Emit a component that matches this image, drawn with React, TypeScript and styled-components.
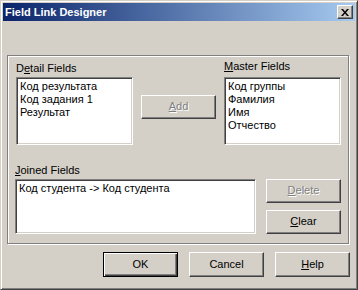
import React from "react";
import styled, { createGlobalStyle } from "styled-components";

const Global = createGlobalStyle`
  html, body { margin: 0; padding: 0; background: #d4d0c8; }
  body { font-family: "Liberation Sans", Arial, sans-serif; font-size: 11px; color: #000; }
  * { box-sizing: border-box; }
`;

const Window = styled.div`
  width: 358px;
  height: 290px;
  background: #d4d0c8;
  border: 1px solid;
  border-color: #d4d0c8 #404040 #404040 #d4d0c8;
  box-shadow: inset 1px 1px #fff, inset -1px -1px #808080;
  padding: 2px;
  display: flex;
  flex-direction: column;
`;

const TitleBar = styled.div`
  height: 18px;
  display: flex;
  align-items: center;
  padding: 0 2px 0 2px;
  background: linear-gradient(to right, #0a246a, #a6caf0);
`;

const Title = styled.div`
  flex: 1;
  color: #fff;
  font-weight: bold;
  font-size: 11px;
  line-height: 13px;
  white-space: nowrap;
`;

const CloseBtn = styled.div`
  width: 16px;
  height: 14px;
  background: #d4d0c8;
  border: 1px solid;
  border-color: #fff #404040 #404040 #fff;
  box-shadow: inset -1px -1px #808080;
  display: flex;
  align-items: center;
  justify-content: center;
`;

const Body = styled.div`
  flex: 1;
  display: flex;
  flex-direction: column;
  padding: 34px 5px 0 4px;
`;

const GroupBox = styled.div`
  width: 342px;
  height: 189px;
  border: 1px solid #808080;
  box-shadow: inset 1px 1px #fff, 1px 1px #fff;
  padding: 4px 0 0 7px;
  display: flex;
  flex-direction: column;
`;

const TopRow = styled.div`
  display: flex;
  align-items: flex-start;
`;

const Column = styled.div<{ $mt?: number; $ml?: number }>`
  display: flex;
  flex-direction: column;
  margin-top: ${(p) => p.$mt ?? 0}px;
  margin-left: ${(p) => p.$ml ?? 0}px;
`;

const Label = styled.div<{ $gap: number }>`
  line-height: 13px;
  height: 13px;
  margin-bottom: ${(p) => p.$gap}px;
  white-space: nowrap;
`;

const ListBox = styled.div<{ $w: number; $h: number }>`
  width: ${(p) => p.$w}px;
  height: ${(p) => p.$h}px;
  background: #fff;
  border: 1px solid;
  border-color: #808080 #fff #fff #808080;
  box-shadow: inset 1px 1px #404040, inset -1px -1px #d4d0c8;
  padding: 2px 2px 0 3px;
  overflow: hidden;
`;

const Item = styled.div`
  line-height: 13px;
  height: 13px;
  white-space: nowrap;
`;

const Button = styled.div<{ $disabled?: boolean; $default?: boolean; $h?: number }>`
  width: 75px;
  height: ${(p) => p.$h ?? 24}px;
  background: #d4d0c8;
  display: flex;
  align-items: center;
  justify-content: center;
  border: 1px solid;
  border-color: ${(p) => (p.$default ? "#000" : "#fff #404040 #404040 #fff")};
  box-shadow: ${(p) =>
    p.$default
      ? "inset 1px 1px #fff, inset -1px -1px #404040, inset -2px -2px #808080"
      : "inset -1px -1px #808080"};
  color: ${(p) => (p.$disabled ? "#808080" : "#000")};
  text-shadow: ${(p) => (p.$disabled ? "1px 1px #fff" : "none")};
  line-height: 13px;
  padding-bottom: 1px;
`;

const AddSlot = styled.div`
  margin: 35px 8px 0 8px;
`;

const JoinedRow = styled.div`
  display: flex;
  align-items: flex-start;
  margin-top: 19px;
`;

const SideButtons = styled.div`
  display: flex;
  flex-direction: column;
  gap: 7px;
  margin-left: 10px;
  margin-top: 15px;
`;

const Footer = styled.div`
  display: flex;
  justify-content: flex-end;
  gap: 11px;
  margin-top: 8px;
`;

const U = styled.span`
  text-decoration: underline;
  text-underline-offset: 1px;
`;

export default function App() {
  return (
    <>
      <Global />
      <Window>
        <TitleBar>
          <Title>Field Link Designer</Title>
          <CloseBtn>
            <svg width="8" height="7" viewBox="0 0 8 7">
              <path d="M0 0h2l2 2.5L6 0h2L5 3.5 8 7H6L4 4.5 2 7H0l3-3.5z" fill="#000" />
            </svg>
          </CloseBtn>
        </TitleBar>
        <Body>
          <GroupBox>
            <TopRow>
              <Column $mt={2} $ml={1}>
                <Label $gap={2}>
                  D<U>e</U>tail Fields
                </Label>
                <ListBox $w={117} $h={68}>
                  <Item>Код результата</Item>
                  <Item>Код задания 1</Item>
                  <Item>Результат</Item>
                </ListBox>
              </Column>
              <AddSlot>
                <Button $disabled>
                  <span>
                    <U>A</U>dd
                  </span>
                </Button>
              </AddSlot>
              <Column>
                <Label $gap={4}>
                  <U>M</U>aster Fields
                </Label>
                <ListBox $w={117} $h={68}>
                  <Item>Код группы</Item>
                  <Item>Фамилия</Item>
                  <Item>Имя</Item>
                  <Item>Отчество</Item>
                </ListBox>
              </Column>
            </TopRow>
            <JoinedRow>
              <Column>
                <Label $gap={2}>
                  <U>J</U>oined Fields
                </Label>
                <ListBox $w={241} $h={55}>
                  <Item>Код студента -&gt; Код студента</Item>
                </ListBox>
              </Column>
              <SideButtons>
                <Button $disabled>
                  <span>
                    <U>D</U>elete
                  </span>
                </Button>
                <Button>
                  <span>
                    <U>C</U>lear
                  </span>
                </Button>
              </SideButtons>
            </JoinedRow>
          </GroupBox>
          <Footer>
            <Button $default $h={25}>OK</Button>
            <Button $h={25}>Cancel</Button>
            <Button $h={25}>
              <span>
                <U>H</U>elp
              </span>
            </Button>
          </Footer>
        </Body>
      </Window>
    </>
  );
}
